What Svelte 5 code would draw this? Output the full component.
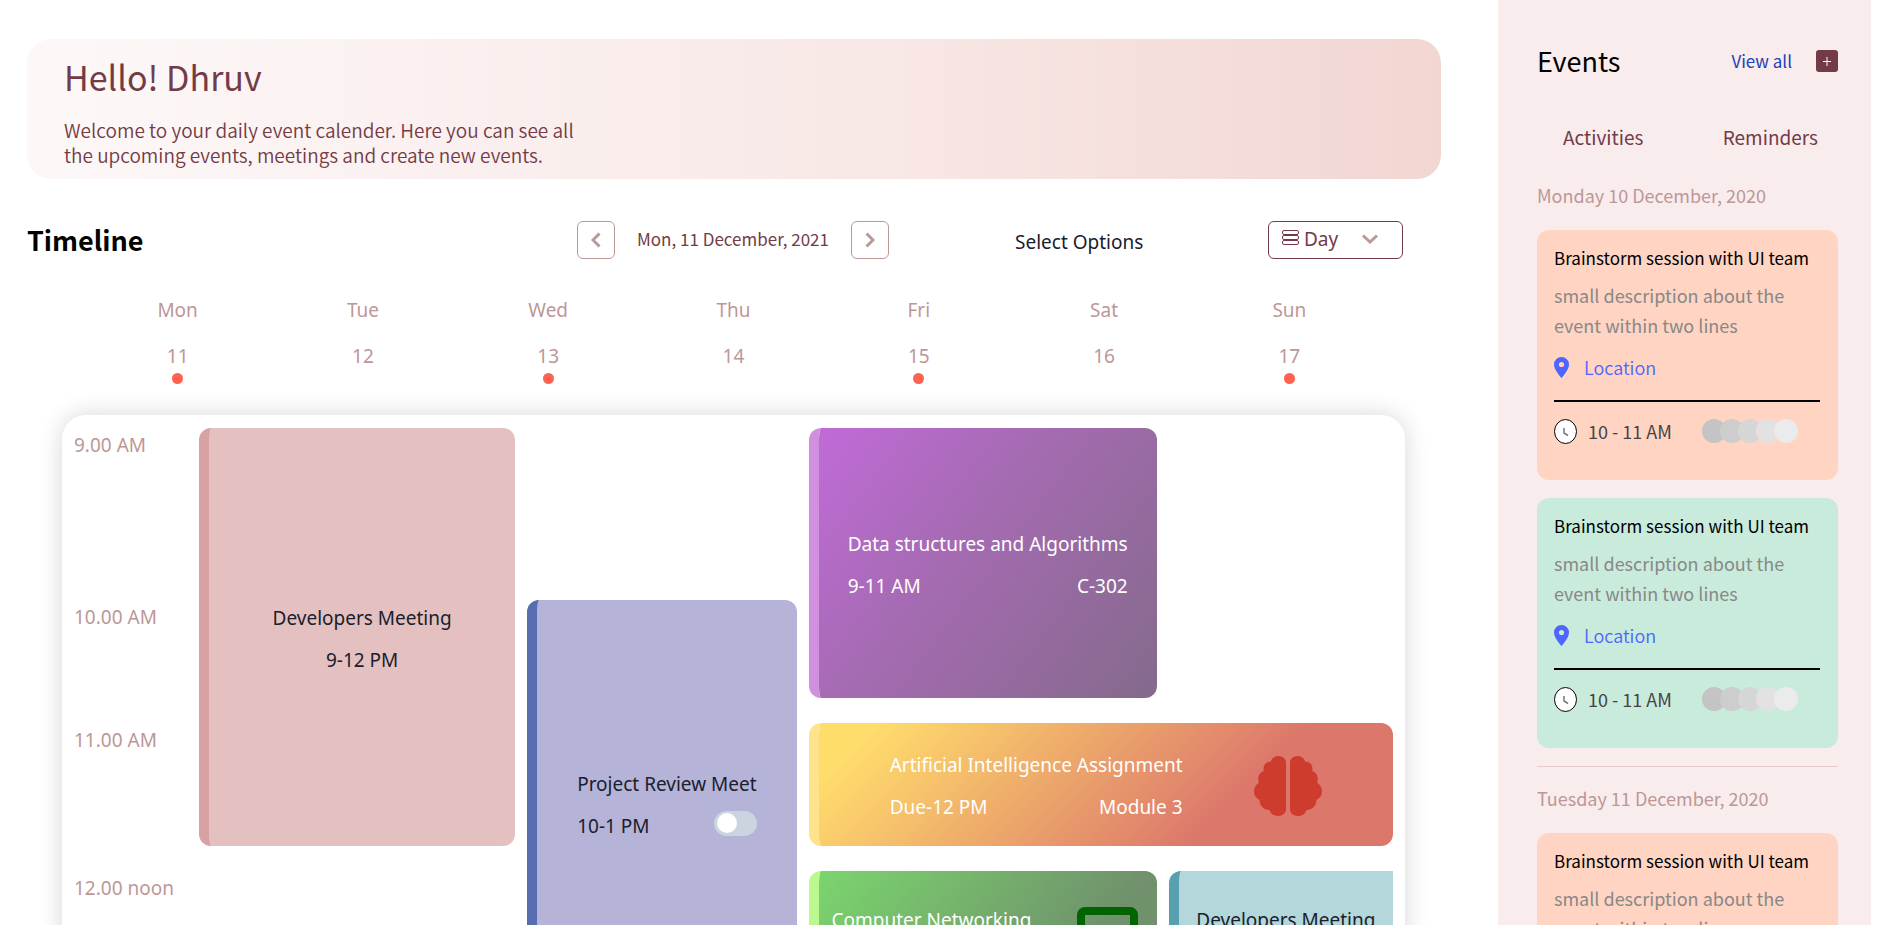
<script>
  const days = [
    { name: 'Mon', date: 11, busy: true },
    { name: 'Tue', date: 12, busy: false },
    { name: 'Wed', date: 13, busy: true },
    { name: 'Thu', date: 14, busy: false },
    { name: 'Fri', date: 15, busy: true },
    { name: 'Sat', date: 16, busy: false },
    { name: 'Sun', date: 17, busy: true }
  ];
  const hours = ['9.00 AM', '10.00 AM', '11.00 AM', '12.00 noon'];
  const groups = [
    { day: 'Monday 10 December, 2020', cards: ['peach', 'mint'] },
    { day: 'Tuesday 11 December, 2020', cards: ['peach'] }
  ];
  let view = $state('Day');
  let reminder = $state(false);
</script>

<div class="page">
  <main>
    <section class="banner">
      <h1>Hello! Dhruv</h1>
      <p>Welcome to your daily event calender. Here you can see all the upcoming events, meetings and create new events.</p>
    </section>

    <div class="toolbar">
      <h2>Timeline</h2>
      <div class="nav">
        <button aria-label="Previous day">
          <svg width="10" height="16" viewBox="0 0 10 16"><path d="M8.5 1.5 2 8l6.500 6.500" /></svg>
        </button>
        <span>Mon, 11 December, 2021</span>
        <button aria-label="Next day">
          <svg width="10" height="16" viewBox="0 0 10 16"><path d="M1.500 1.500 8 8l-6.500 6.500" /></svg>
        </button>
      </div>
      <label for="view">Select Options</label>
      <div class="picker">
        <svg class="stack" width="18" height="16" viewBox="0 0 18 16">
          <rect x="0.500" y="0.500" width="16" height="4" rx="1.500" />
          <rect x="0.500" y="5.500" width="16" height="4" rx="1.500" />
          <rect x="0.500" y="10.500" width="16" height="4" rx="1.500" />
        </svg>
        <select id="view" bind:value={view}>
          <option>Day</option>
          <option>Week</option>
          <option>Month</option>
        </select>
        <svg class="down" width="16" height="10" viewBox="0 0 16 10"><path d="M1 1.500 8 8l7-6.500" /></svg>
      </div>
    </div>

    <div class="days">
      {#each days as d}
        <div class="day">
          <span>{d.name}</span>
          <span>{d.date}</span>
          {#if d.busy}<i></i>{/if}
        </div>
      {/each}
    </div>

    <section class="panel">
      <div class="schedule">
        {#each hours as h}
          <time>{h}</time>
        {/each}

        <article class="slot rose">
          <div class="info centered">
            <h3>Developers Meeting</h3>
            <p><span>9-12 PM</span></p>
          </div>
        </article>

        <article class="slot blue">
          <div class="info">
            <h3>Project Review Meet</h3>
            <p>
              <span>10-1 PM</span>
              <input type="checkbox" role="switch" aria-label="Project Review Meet reminder" bind:checked={reminder} />
            </p>
          </div>
        </article>

        <article class="slot purple">
          <div class="info">
            <h3>Data structures and Algorithms</h3>
            <p><span>9-11 AM</span><span>C-302</span></p>
          </div>
        </article>

        <article class="slot amber">
          <div class="info">
            <h3>Artificial Intelligence Assignment</h3>
            <p><span>Due-12 PM</span><span>Module 3</span></p>
          </div>
          <svg width="68" height="60" viewBox="0 0 68 60" fill="#cd3c2c">
            <path id="lobe" d="M32 7C32 3 29 0 24.500 0 20.500 0 17.500 2.500 17 5.500 12.500 5.500 9.500 8.500 9.500 13 9.500 14 9.500 14.500 9.700 15 5.500 16.500 3.500 20.500 4.500 25 4.600 26 4.600 26.500 4.500 27 1.500 29 0 32 0 35.500 0 39.500 2.500 42.500 5.500 44 5.500 49.500 9.500 54 15.500 54 16.500 57.500 19.500 60 24 60 29 60 32 57 32 53Z" />
            <use href="#lobe" transform="matrix(-1 0 0 1 68 0)" />
          </svg>
        </article>

        <article class="slot green">
          <div class="info">
            <h3>Computer Networking</h3>
          </div>
          <svg width="61" height="64" viewBox="0 0 61 64" fill="none" stroke="#006400" stroke-width="8">
            <rect x="4" y="6" width="53" height="42" rx="4" />
            <path d="M16 60h29" />
          </svg>
        </article>

        <article class="slot teal">
          <div class="info centered">
            <h3>Developers Meeting</h3>
          </div>
        </article>
      </div>
    </section>
  </main>

  <aside>
    <header>
      <h2>Events</h2>
      <a href="#all">View all</a>
      <button aria-label="Add event">
        <svg width="8" height="9" viewBox="0 0 8 9"><path d="M4 0v9M0 4.500h8" /></svg>
      </button>
    </header>
    <nav>
      <a href="#activities">Activities</a>
      <a href="#reminders">Reminders</a>
    </nav>
    {#each groups as g}
      <section class="group">
        <h4>{g.day}</h4>
        {#each g.cards as tone}
          <article class="card {tone}">
            <h5>Brainstorm session with UI team</h5>
            <p>small description about the event within two lines</p>
            <a class="place" href="#location">
              <svg width="15" height="21" viewBox="0 0 15 21"><path fill="#4c66ff" fill-rule="evenodd" d="M7.500 0A7.400 7.400 0 0 0 0 7.500C0 13 7.500 21 7.500 21S15 13 15 7.500A7.400 7.400 0 0 0 7.500 0Zm0 4.900a2.600 2.600 0 1 1 0 5.200 2.600 2.600 0 0 1 0-5.200Z" /></svg>
              Location
            </a>
            <div class="when">
              <svg width="23" height="25" viewBox="0 0 23 25">
                <ellipse cx="11.500" cy="12.500" rx="11" ry="12" fill="#fff" stroke="#000" />
                <path d="M10 9v5l4 2.500" fill="none" stroke="#777" stroke-width="1.500" />
              </svg>
              <span>10 - 11 AM</span>
              <div class="people"><i></i><i></i><i></i><i></i><i></i></div>
            </div>
          </article>
        {/each}
      </section>
    {/each}
  </aside>
</div>

<style>
  :global(body) { background: #fff; }
  * { box-sizing: border-box; }
  h1, h2, h3, h4, h5, p { margin: 0; font-weight: 400; }
  a { text-decoration: none; }
  button, select { font: inherit; cursor: pointer; }

  .page {
    display: flex;
    height: 100vh;
    overflow: hidden;
    padding-right: 9px;
    font-family: "Noto Sans CJK SC", "Noto Sans", sans-serif;
    color: #1a202c;
  }
  main { flex: 1; min-width: 0; padding: 39px 57px 0 27px; }

  .banner {
    padding: 18px 37px 12px;
    border-radius: 24px;
    background: linear-gradient(90deg, #fdf8f8, #faf0ef 30%, #f8e8e6 60%, #f2d6d2);
    color: #733b47;
  }
  .banner h1 { font-size: 34px; line-height: 40px; }
  .banner p { margin-top: 20px; max-width: 530px; font-size: 19px; line-height: 25px; font-weight: 350; }

  .toolbar {
    display: grid;
    grid-template-columns: 550fr 438fr 253fr 173fr;
    margin-top: 42px;
    height: 38px;
  }
  .toolbar h2 { font-size: 27px; font-weight: 700; line-height: 38px; color: #000; }
  .nav { display: flex; align-items: flex-start; gap: 22px; }
  .nav span { font-size: 17px; line-height: 36px; color: #733b47; white-space: nowrap; }
  .nav button {
    display: grid;
    place-items: center;
    width: 38px;
    height: 38px;
    padding: 0;
    border: 1px solid #bc9797;
    border-radius: 6px;
    background: #fff;
  }
  .nav path, .down path { fill: none; stroke: #bc9797; stroke-width: 3; }
  .toolbar label { font: 19px/42px "Noto Sans", sans-serif; white-space: nowrap; }
  .picker { position: relative; width: 135px; height: 38px; }
  .picker select {
    appearance: none;
    width: 100%;
    height: 38px;
    padding: 0 0 2px 35px;
    border: 1px solid #733b47;
    border-radius: 6px;
    background: #fff;
    font: 19px "Noto Sans", sans-serif;
    color: #733b47;
  }
  .picker svg { position: absolute; pointer-events: none; }
  .stack { left: 14px; top: 9px; fill: none; stroke: #733b47; }
  .down { left: 94px; top: 13px; }

  .days {
    display: grid;
    grid-template-columns: repeat(7, 1fr);
    margin: 36px 59px 0 58px;
    min-height: 89px;
    font: 19px/30px "Noto Sans", sans-serif;
    color: #bc9797;
  }
  .day { display: flex; flex-direction: column; align-items: center; }
  .day span + span { margin: 16px 0 2px; }
  .day i { width: 11px; height: 11px; border-radius: 50%; background: #ff6250; }

  .panel {
    margin: 31px 36px 0 35px;
    padding: 13px 12px;
    border-radius: 24px;
    background: #fff;
    box-shadow: 0 0 24px rgba(0, 0, 0, 0.16);
  }
  .schedule {
    display: grid;
    grid-template-columns: 113px 316fr 269fr 348fr 224fr;
    grid-template-rows: 147px 98px 123px 135px;
    gap: 25px 12px;
    overflow: hidden;
    font: 19px/30px "Noto Sans", sans-serif;
  }
  time { grid-column: 1; padding-top: 2px; color: #bc9797; white-space: nowrap; }

  .slot {
    display: flex;
    align-items: center;
    justify-content: space-evenly;
    padding-top: 4px;
    border-left: 10px solid;
    border-radius: 12px;
  }
  .info { white-space: nowrap; }
  .info h3 { font-size: 19px; }
  .info p { display: flex; justify-content: space-between; margin-top: 12px; }
  .centered p { justify-content: center; }
  .rose { grid-area: 1 / 2 / 4; border-color: #d8a1a3; background: #e4c0c0; }
  .blue { grid-area: 2 / 3 / 5; border-color: #586cb1; background: #b6b3d9; }
  .purple { grid-area: 1 / 4 / 3; border-color: #d190de; background: linear-gradient(127deg, #c06bd8, #a66bb3 40%, #846a8b) padding-box; color: #fff; }
  .amber { grid-area: 3 / 4 / 4 / 6; padding-top: 2px; border-color: #ffe38c; background: linear-gradient(135deg, #ffdd6b 8%, #dc776b 71%) padding-box; color: #fff; }
  .green { grid-area: 4 / 4; border-color: #bdf78f; background: linear-gradient(127deg, #7bd56d, #70916c 75%) padding-box; color: #fff; }
  .teal { grid-area: 4 / 5; border-color: #589fb0; border-radius: 12px 0 0 12px; background: #b3d7da; }
  .green, .teal { align-items: flex-start; padding-top: 34px; }
  .green { justify-content: space-between; padding-left: 13px; padding-right: 19px; }

  input[type='checkbox'] {
    appearance: none;
    width: 43px;
    height: 25px;
    margin: 0;
    padding: 2px 3px;
    border-radius: 13px;
    background: #cbd5e0;
    cursor: pointer;
  }
  input[type='checkbox']::before {
    content: '';
    display: block;
    width: 20px;
    height: 20px;
    border-radius: 50%;
    background: #fff;
  }
  input[type='checkbox']:checked { padding-left: 20px; background: #586cb1; }

  aside { width: 373px; flex: none; padding: 38px 33px 0 39px; background: #f9eced; }
  aside header { display: flex; align-items: center; height: 46px; }
  aside header h2 { flex: 1; font-size: 27px; line-height: 46px; color: #000; }
  aside header a { font-size: 17px; line-height: 46px; color: #1e40b8; }
  aside header button {
    display: grid;
    place-items: center;
    width: 22px;
    height: 22px;
    margin-left: 24px;
    padding: 0;
    border: 0;
    border-radius: 3px;
    background: #733b47;
  }
  aside header path { stroke: #fff; stroke-width: 1; }
  aside nav { display: flex; justify-content: space-between; margin-top: 38px; padding: 0 20px 0 26px; font-size: 19px; line-height: 30px; }
  aside nav a { color: #733b47; }

  .group { padding-top: 28px; }
  .group h4 { font-size: 18px; line-height: 30px; color: #bc9797; }
  .group + .group { margin-top: 18px; border-top: 1px solid #e9c9c9; padding-top: 16px; }
  .card { margin-top: 18px; height: 250px; padding: 15px 18px 0 17px; border-radius: 12px; }
  .group h4 + .card { margin-top: 20px; }
  .peach { background: #ffd4c2; }
  .mint { background: #c8ebdc; }
  .card h5 { font-size: 17px; line-height: 26px; color: #000; white-space: nowrap; }
  .card p { margin-top: 9px; font-size: 18px; line-height: 30px; color: #888; }
  .place { display: flex; align-items: center; gap: 15px; padding: 12px 0 18px; border-bottom: 2px solid #000; font-size: 18px; line-height: 30px; font-weight: 350; color: #4c66ff; }
  .when { display: flex; align-items: center; margin-top: 14px; font-size: 18px; line-height: 30px; color: #444; }
  .when span { margin-left: 11px; }
  .people { display: flex; margin-left: auto; padding-right: 22px; }
  .people i { width: 24px; height: 24px; border-radius: 50%; background: #c4c4c4; }
  .people i + i { margin-left: -6px; background: #cdcdcd; }
  .people i:nth-child(3) { background: #d6d6d6; }
  .people i:nth-child(4) { background: #e2e2e2; }
  .people i:nth-child(5) { background: #ebebeb; }
</style>
